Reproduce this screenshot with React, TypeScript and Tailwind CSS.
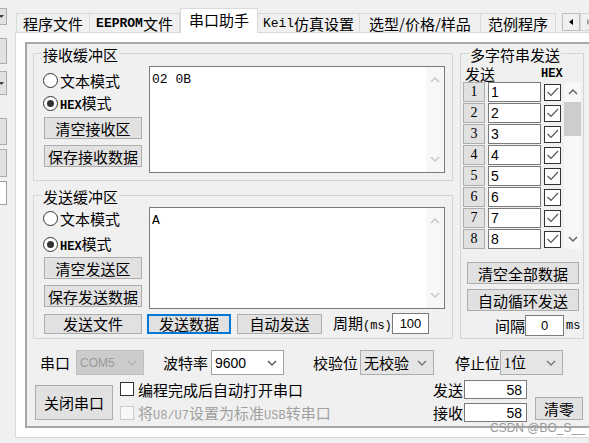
import React from "react";

const mono = "font-['Liberation_Mono',monospace]";
const sans = "font-['Liberation_Sans',sans-serif]";
const serif = "font-['Liberation_Serif',serif]";

function Chevron({ up = false, color = "#606060" }: { up?: boolean; color?: string }) {
  return (
    <svg width="10" height="6" viewBox="0 0 10 6">
      <polyline points={up ? "1,5 5,1 9,5" : "1,1 5,5 9,1"} fill="none" stroke={color} strokeWidth="1.4" />
    </svg>
  );
}

function Tick({ size = 13 }: { size?: number }) {
  return (
    <svg width={size} height={size} viewBox="0 0 13 13">
      <polyline points="1.5,6 5,9.5 12,2" fill="none" stroke="#555" strokeWidth="1.2" />
    </svg>
  );
}

function Btn({ className = "", children }: { className?: string; children: React.ReactNode }) {
  return (
    <div className={"flex shrink-0 items-center justify-center border border-[#adadad] bg-[#e1e1e1] " + className}>
      {children}
    </div>
  );
}

function Hex({ className = "text-[12px]" }: { className?: string }) {
  return <span className={mono + " font-bold " + className}>HEX</span>;
}

function Radio({ checked = false, className = "", children }: { checked?: boolean; className?: string; children: React.ReactNode }) {
  return (
    <div className={"flex h-[20px] items-center gap-[2px] " + className}>
      <span className="flex h-[15px] w-[15px] items-center justify-center rounded-full border border-[#333] bg-white">
        {checked && <span className="h-[7px] w-[7px] rounded-full bg-[#333]" />}
      </span>
      <span>{children}</span>
    </div>
  );
}

function Group({ title, className = "", children }: { title: string; className?: string; children?: React.ReactNode }) {
  return (
    <div className={"flex flex-col border border-[#d5d5d5] " + className}>
      <div className="-mt-[8px] ml-[8px] h-[17px] w-fit bg-[#f0f0f0] px-[1px] leading-[17px]">{title}</div>
      {children}
    </div>
  );
}

function TextBox({ className = "", text }: { className?: string; text: string }) {
  return (
    <div className={"flex w-[296px] border border-[#7a7a7a] bg-white " + className}>
      <div className={"flex-1 pl-[2px] pt-[6px] text-[13px] " + mono}>{text}</div>
      <div className="flex w-[18px] flex-col items-center justify-between bg-[#f7f7f7] py-[10px]">
        <Chevron up color="#c4c4c4" />
        <Chevron color="#c4c4c4" />
      </div>
    </div>
  );
}

function Select({ className = "", children, chevron = "#777" }: { className?: string; children: React.ReactNode; chevron?: string }) {
  return (
    <div className={"flex h-[25px] shrink-0 items-center justify-between pl-[3px] pr-[6px] " + className}>
      {children}
      <Chevron color={chevron} />
    </div>
  );
}

function LeftStrip() {
  const box = "-ml-[23px] w-[30px] border border-[#adadad] bg-[#e1e1e1]";
  return (
    <div className="flex w-[15px] shrink-0 flex-col">
      <div className={box + " mt-[8px] flex h-[17px] items-center justify-end pr-[2px]"}>
        <svg width="5" height="3" viewBox="0 0 5 3"><polygon points="0,0 5,0 2.5,3" fill="#444" /></svg>
      </div>
      <div className={box + " mt-[13px] h-[26px]"} />
      <div className={box + " mt-[7px] flex h-[24px] items-center justify-end pr-[2px]"}>
        <svg width="5" height="3" viewBox="0 0 5 3"><polygon points="0,0 5,0 2.5,3" fill="#444" /></svg>
      </div>
      <div className={box + " mt-[23px] h-[27px]"} />
      <div className={box + " mt-[4px] h-[28px]"} />
      <div className="-ml-[23px] mt-[4px] h-[24px] w-[30px] border border-[#a0a0a0] bg-white" />
    </div>
  );
}

function TabBar() {
  const tab = "flex h-[19px] shrink-0 items-center justify-center border-r border-t border-[#d9d9d9] bg-[#f0f0f0]";
  return (
    <div className="flex h-[32px] shrink-0 items-end pl-[1px]">
      <div className={tab + " w-[74px] border-l"}>程序文件</div>
      <div className={tab + " w-[90px]"}>
        <span className={mono + " text-[13px] font-bold"}>EEPROM</span>文件
      </div>
      <div className="relative z-10 -mb-[1px] flex h-[25px] w-[78px] shrink-0 items-center justify-center border-l border-r border-t border-[#d9d9d9] bg-white pb-[4px]">
        串口助手
      </div>
      <div className={tab + " w-[102px]"}>
        <span className={mono + " text-[13px]"}>Keil</span>仿真设置
      </div>
      <div className={tab + " w-[121px]"}>选型/价格/样品</div>
      <div className={tab + " w-[75px]"}>范例程序</div>
      <div className="mb-[1px] ml-[6px] flex h-[18px] w-[18px] shrink-0 items-center justify-center border border-[#bdbdbd] bg-[#f0f0f0]">
        <svg width="4" height="6" viewBox="0 0 4 6"><polygon points="4,0 4,6 0,3" fill="#000" /></svg>
      </div>
      <div className="mb-[1px] flex h-[18px] w-[18px] shrink-0 items-center justify-center border border-[#d5d5d5] bg-[#f0f0f0]">
        <svg width="4" height="6" viewBox="0 0 4 6"><polygon points="0,0 0,6 4,3" fill="#a0a0a0" /></svg>
      </div>
    </div>
  );
}

function ReceiveGroup() {
  return (
    <Group title="接收缓冲区" className="h-[128px]">
      <div className="mt-[3px] flex">
        <div className="flex w-[115px] shrink-0 flex-col pl-[9px] pt-[4px]">
          <Radio>文本模式</Radio>
          <Radio checked className="mt-[3px]">
            <Hex />模式
          </Radio>
          <Btn className="ml-[1px] mt-[4px] h-[22px] w-[98px]">清空接收区</Btn>
          <Btn className="ml-[1px] mt-[6px] h-[22px] w-[98px]">保存接收数据</Btn>
        </div>
        <TextBox className="h-[107px]" text="02 0B" />
      </div>
    </Group>
  );
}

function SendGroup() {
  return (
    <Group title="发送缓冲区" className="mt-[14px] h-[144px]">
      <div className="mt-[2px] flex">
        <div className="flex w-[115px] shrink-0 flex-col pl-[9px] pt-[1px]">
          <Radio>文本模式</Radio>
          <Radio checked className="mt-[6px]">
            <Hex />模式
          </Radio>
          <Btn className="ml-[1px] mt-[3px] h-[22px] w-[98px]">清空发送区</Btn>
          <Btn className="ml-[1px] mt-[6px] h-[22px] w-[98px]">保存发送数据</Btn>
        </div>
        <TextBox className="h-[102px]" text="A" />
      </div>
      <div className="ml-[10px] mt-[4px] flex h-[21px] items-center">
        <Btn className="h-[20px] w-[98px]">发送文件</Btn>
        <div className="ml-[5px] flex h-[20px] w-[84px] shrink-0 items-center justify-center border-2 border-[#0078d7] bg-[#e1e1e1]">
          发送数据
        </div>
        <Btn className="ml-[6px] h-[20px] w-[85px]">自动发送</Btn>
        <span className="ml-[11px] block w-[59px] shrink-0 whitespace-nowrap">
          周期<span className={mono + " text-[12px]"}>(ms)</span>
        </span>
        <div className={"flex h-[21px] w-[37px] shrink-0 items-center justify-center border border-[#7a7a7a] bg-white text-[13px] " + sans}>
          100
        </div>
      </div>
    </Group>
  );
}

function MultiGroup() {
  const rows = [1, 2, 3, 4, 5, 6, 7, 8];
  return (
    <Group title="多字符串发送" className="h-[286px] w-[124px] shrink-0">
      <div className="mt-[3px] flex h-[15px] items-center pl-[4px]">
        <span className="w-[76px]">发送</span>
        <Hex className="text-[12px]" />
      </div>
      <div className="mt-[1px] flex pl-[2px]">
        <div className="flex flex-col gap-[1px]">
          {rows.map((n) => (
            <div key={n} className="flex h-[20px] items-center">
              <div className={"flex h-[20px] w-[22px] items-center justify-center border border-[#adadad] bg-[#e1e1e1] text-[14px] " + serif}>
                {n}
              </div>
              <div className={"ml-[3px] flex h-[20px] w-[53px] items-center border border-[#7a7a7a] bg-white pl-[2px] text-[14px] " + sans}>
                {n}
              </div>
              <div className="ml-[3px] flex h-[17px] w-[17px] items-center justify-center border border-[#333] bg-white">
                <Tick />
              </div>
            </div>
          ))}
        </div>
        <div className="ml-[3px] flex h-[167px] w-[17px] flex-col items-center bg-[#f7f7f7]">
          <div className="flex h-[20px] items-center">
            <Chevron up />
          </div>
          <div className="h-[34px] w-[17px] bg-[#cdcdcd]" />
          <div className="flex-1" />
          <div className="flex h-[20px] items-center">
            <Chevron />
          </div>
        </div>
      </div>
      <Btn className="ml-[6px] mt-[13px] h-[22px] w-[112px]">清空全部数据</Btn>
      <Btn className="ml-[6px] mt-[5px] h-[22px] w-[112px]">自动循环发送</Btn>
      <div className="ml-[34px] mt-[4px] flex h-[21px] items-center">
        <span className="w-[30px]">间隔</span>
        <div className={"flex h-[21px] w-[39px] items-center justify-center border border-[#7a7a7a] bg-white text-[13px] " + sans}>0</div>
        <span className={"ml-[2px] text-[12px] " + mono}>ms</span>
      </div>
    </Group>
  );
}

function PortRow() {
  return (
    <div className="ml-[13px] mt-[11px] flex h-[25px] items-center">
      <span className="w-[30px] shrink-0">串口</span>
      <Select className="ml-[6px] w-[68px] border border-[#bfbfbf] bg-[#cccccc]" chevron="#b0b0b0">
        <span className={"text-[12px] text-[#9a9a9a] " + sans}>COM5</span>
      </Select>
      <span className="ml-[19px] w-[45px] shrink-0">波特率</span>
      <Select className="ml-[3px] w-[73px] border border-[#a0a0a0] bg-white" chevron="#555">
        <span className={"text-[14px] " + sans}>9600</span>
      </Select>
      <span className="ml-[29px] w-[45px] shrink-0">校验位</span>
      <Select className="ml-[2px] w-[74px] border border-[#adadad] bg-[#e5e5e5]">
        <span>无校验</span>
      </Select>
      <span className="ml-[21px] w-[45px] shrink-0">停止位</span>
      <Select className="w-[63px] border border-[#adadad] bg-[#e5e5e5]">
        <span>
          <span className={serif + " text-[14px]"}>1</span>位
        </span>
      </Select>
    </div>
  );
}

function BottomRow() {
  return (
    <div className="mt-[5px] flex items-start">
      <Btn className="ml-[8px] mt-[5px] h-[35px] w-[78px]">关闭串口</Btn>
      <div className="ml-[7px] flex w-[313px] shrink-0 flex-col">
        <div className="flex h-[18px] items-center gap-[4px]">
          <span className="h-[14px] w-[14px] border border-[#333] bg-white" />
          <span>编程完成后自动打开串口</span>
        </div>
        <div className="mt-[6px] flex h-[18px] items-center gap-[4px] text-[#a0a0a0]">
          <span className="h-[14px] w-[14px] border border-[#cccccc] bg-[#f7f7f7]" />
          <span>
            将<span className={mono + " text-[12px]"}>U8/U7</span>设置为标准<span className={mono + " text-[12px]"}>USB</span>转串口
          </span>
        </div>
      </div>
      <div className="flex flex-col">
        <div className="flex h-[19px] items-center">
          <span className="w-[31px]">发送</span>
          <div className={"flex h-[19px] w-[63px] items-center justify-end border border-[#7a7a7a] bg-white pr-[4px] text-[14px] " + sans}>58</div>
        </div>
        <div className="mt-[4px] flex h-[19px] items-center">
          <span className="w-[31px]">接收</span>
          <div className={"flex h-[19px] w-[63px] items-center justify-end border border-[#7a7a7a] bg-white pr-[4px] text-[14px] " + sans}>58</div>
        </div>
      </div>
      <Btn className="ml-[8px] mt-[17px] h-[23px] w-[48px]">清零</Btn>
    </div>
  );
}

function Frame() {
  return (
    <div className="relative flex h-[386px] w-[600px] shrink-0 flex-col border-b-2 border-l-2 border-t-2 border-[#a8a8a8] bg-[#f0f0f0]">
      <div className="ml-[6px] mt-[9px] flex gap-[7px]">
        <div className="flex w-[420px] shrink-0 flex-col">
          <ReceiveGroup />
          <SendGroup />
        </div>
        <MultiGroup />
      </div>
      <PortRow />
      <BottomRow />
      <span className={"absolute left-[463px] top-[378px] text-[12px] text-[#9a9a9a] " + sans}>CSDN @BO_S__</span>
    </div>
  );
}

export default function App() {
  return (
    <div className="flex h-[443px] w-[589px] overflow-hidden bg-[#f0f0f0] font-['Noto_Sans_CJK_SC',sans-serif] text-[15px] leading-none text-black">
      <LeftStrip />
      <div className="flex min-w-0 flex-1 flex-col">
        <TabBar />
        <div className="flex h-[406px] w-[620px] shrink-0 border-b border-l border-t border-[#d9d9d9] bg-white pb-[9px] pl-[9px] pt-[9px]">
          <Frame />
        </div>
      </div>
    </div>
  );
}
